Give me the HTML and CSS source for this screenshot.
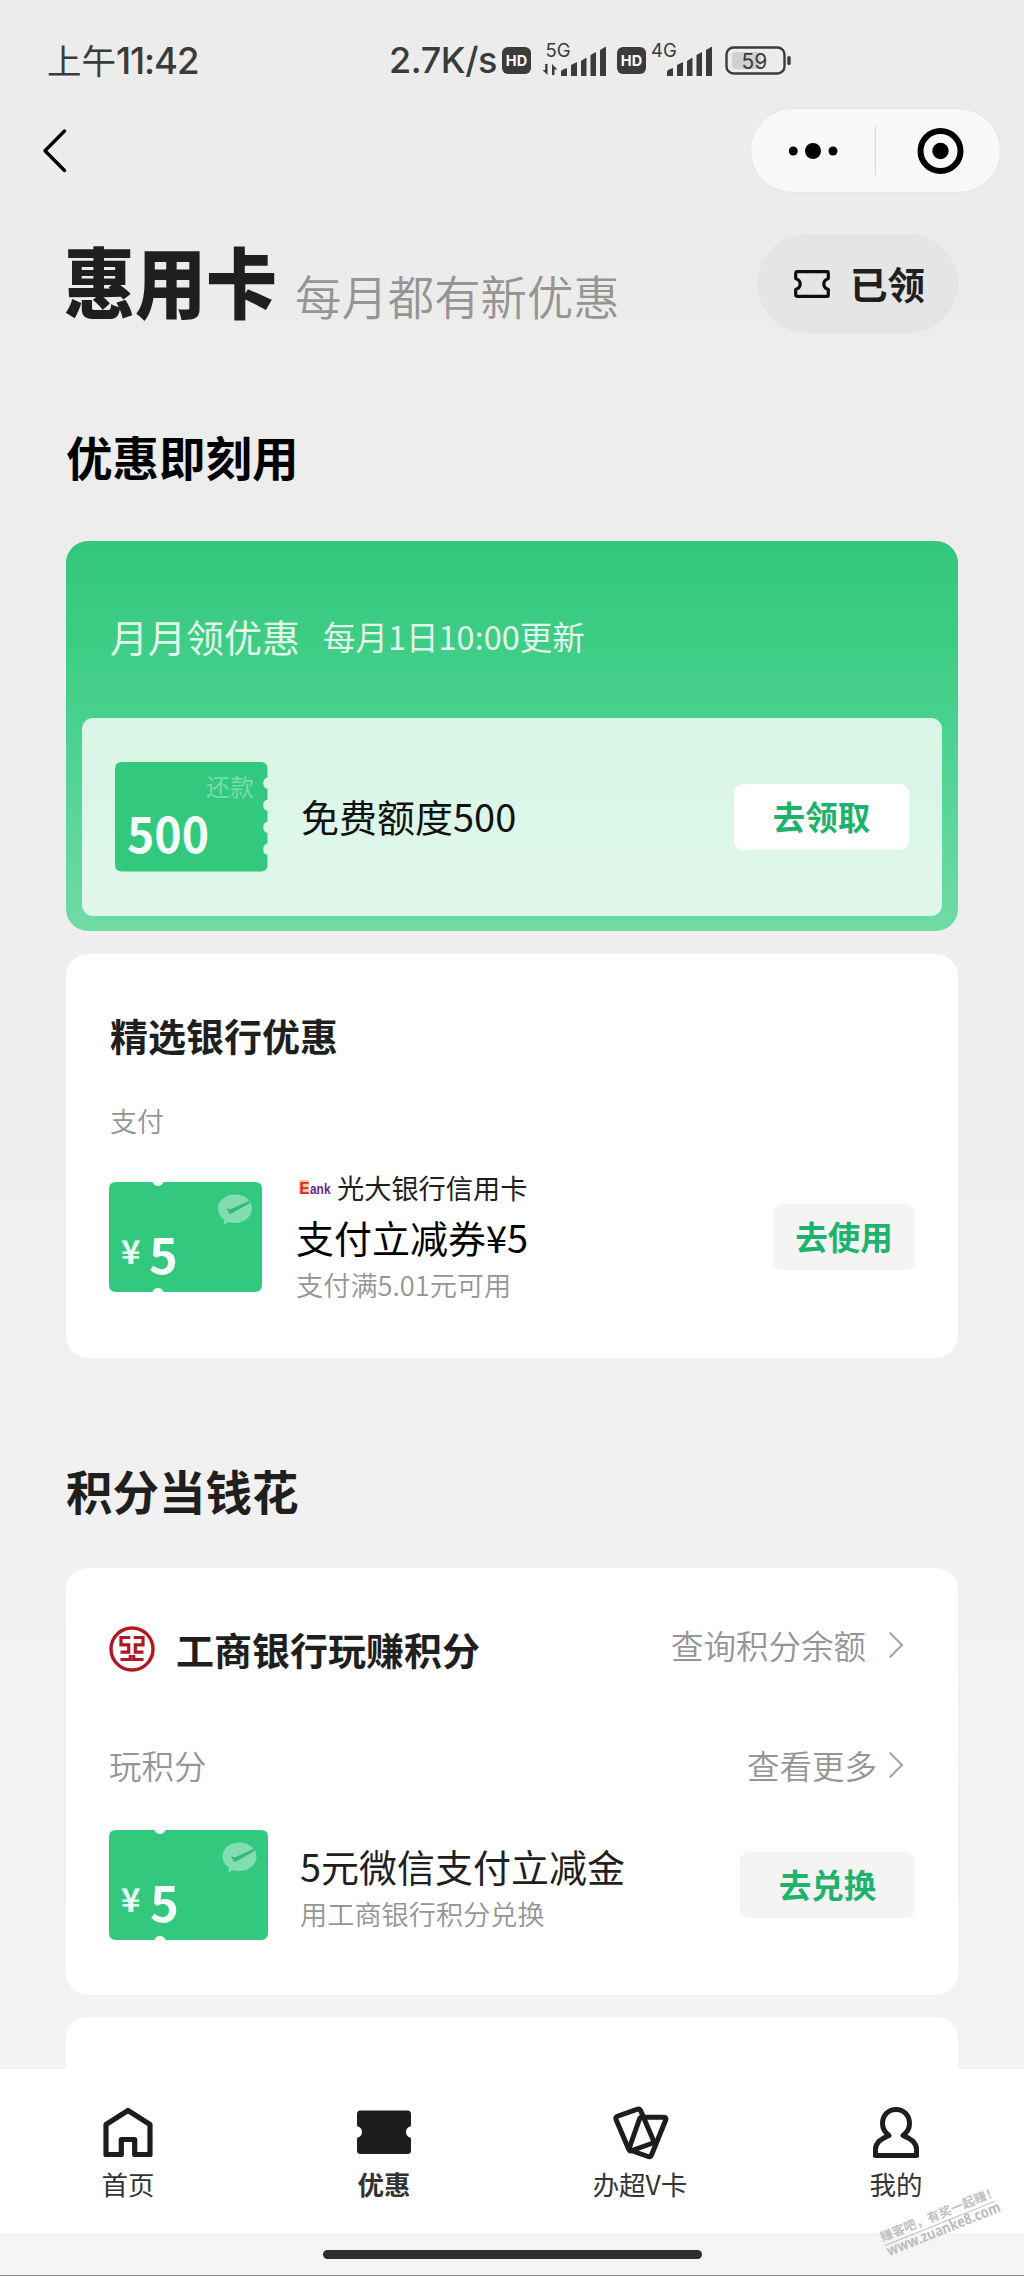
FILE: index.html
```html
<!DOCTYPE html>
<html lang="zh-CN">
<head>
<meta charset="utf-8">
<title>惠用卡</title>
<link rel="stylesheet" href="styles.css">
</head>
<body>
<div class="page">
  <header class="status">
    <span class="clock">上午<span class="clock-num">11:42</span></span>
    <span class="speed">2.7K/s</span>
    <svg class="status-icons" width="290" height="40" viewBox="502 40 290 40">
      <g fill="#3b3b3b">
        <rect x="502" y="47" width="29" height="27" rx="6"/>
        <rect x="617" y="47" width="29" height="27" rx="6"/>
        <path id="bars" d="M561 76v-4q0-2 2-2.500l4-1.500v8zM571 76V65l6-3v14zM581 76V61l5.500-3.500V76zM590.500 76V55l5.500-3v24zM600 76V50l6-3.500V76z"/>
        <use href="#bars" x="106"/>
        <path d="M547.500 64v11l-5-5h2.700v-6zM552 75V64l5.500 5.500h-3V75z"/>
        <rect x="787.300" y="56" width="3.400" height="9" rx="1.500"/>
      </g>
      <rect x="732" y="52" width="29" height="17" rx="3" fill="#d0d0d0"/>
      <rect x="726.500" y="47.500" width="58" height="26" rx="7" fill="none" stroke="#3b3b3b" stroke-width="2.400"/>
      <text class="hd" x="516.500" y="65.800">HD</text>
      <text class="hd" x="631.500" y="65.800">HD</text>
      <text class="net" x="558" y="57">5G</text>
      <text class="net" x="664" y="57">4G</text>
      <text class="batt" x="754.500" y="69">59</text>
    </svg>
  </header>

  <nav class="nav">
    <svg width="24" height="44" viewBox="0 0 24 44" fill="none" stroke="#000" stroke-width="3.400" stroke-linecap="round" stroke-linejoin="round"><path d="M21.500 2L2 21.700 21.500 41.500"/></svg>
    <div class="capsule">
      <svg width="249" height="83" viewBox="0 0 249 83">
        <circle cx="42.300" cy="42" r="4.500"/><circle cx="62" cy="42" r="8"/><circle cx="82" cy="42" r="4.500"/>
        <path d="M124.500 17v49" stroke="#ddd" stroke-width="1.300"/>
        <circle cx="189.500" cy="42" r="20" fill="none" stroke="#000" stroke-width="6"/><circle cx="189.500" cy="42" r="8.200"/>
      </svg>
    </div>
  </nav>

  <main class="content">
    <div class="hero">
      <h1 class="hero-title">惠用卡</h1>
      <p class="hero-sub">每月都有新优惠</p>
      <div class="claimed">
        <svg width="36" height="28" viewBox="0 0 36 28" fill="none" stroke="#0c0c0c" stroke-width="3.200" stroke-linejoin="round"><path d="M3 1.700h30q1.300 0 1.300 1.300v5.500q-4.500 1.500-4.500 5.500t4.500 5.500V25q0 1.300-1.300 1.300H3Q1.700 26.300 1.700 25v-5.500q4.500-1.500 4.500-5.500T1.700 8.500V3Q1.700 1.700 3 1.700z"/></svg>
        <span>已领</span>
      </div>
    </div>

    <h2 class="section-title section-title-first">优惠即刻用</h2>

    <section class="monthly">
      <div class="monthly-head">
        <span class="monthly-name">月月领优惠</span>
        <span class="monthly-time">每月1日10:00更新</span>
      </div>
      <div class="monthly-item">
        <svg class="coupon" width="153" height="110" viewBox="0 0 153 110">
          <path fill="#32c97e" d="M7 0h138.500q7 0 7 7v8.500a6 6 0 0 0 0 11.500v10.500a6 6 0 0 0 0 11.500v10.500a6 6 0 0 0 0 11.500v10.500a6 6 0 0 0 0 11.500v9.500q0 7-7 7H7q-7 0-7-7V7q0-7 7-7z"/>
          <text class="coupon-tag" x="91" y="34">还款</text>
          <text class="coupon-num" x="12" y="91" textLength="82" lengthAdjust="spacingAndGlyphs">500</text>
        </svg>
        <span class="item-title monthly-title">免费额度500</span>
        <span class="btn btn-white">去领取</span>
      </div>
    </section>

    <section class="card bank">
      <h3 class="card-title">精选银行优惠</h3>
      <p class="bank-kind">支付</p>
      <div class="row bank-row">
        <svg class="coupon" width="153" height="110" viewBox="0 0 153 110">
          <path fill="#32c97e" d="M7 0h36.500a6 6.500 0 0 0 11 0H146q7 0 7 7v96q0 7-7 7H54.500a6 6.500 0 0 0-11 0H7q-7 0-7-7V7q0-7 7-7z"/>
          <path fill="#82deb0" d="M126 12.500c9.500 0 17 6 17 14s-7.500 14.500-17 14.500q-4 0-7-1l-4 3 .3-5.500c-4-2.500-6.300-6.500-6.300-11 0-8 7.500-14 17-14z"/>
          <path fill="#35b878" d="M117.500 26l3.500 1.500 19-8.500 1 2-18.500 10.500q-1.500 1-2.500-.5z"/>
          <text class="coupon-yen" x="12" y="82">¥</text>
          <text class="coupon-num" x="40" y="92">5</text>
        </svg>
        <div class="info bank-info">
          <div class="bank-name">
            <svg width="32" height="22" viewBox="0 -2 32 22">
              <rect x="0" y="2" width="10" height="14" rx="1" fill="#f8c9a0"/>
              <text class="logo-e" x="0.500" y="15.500" textLength="10" lengthAdjust="spacingAndGlyphs">E</text>
              <text class="logo-ank" x="11" y="15.500" textLength="20.500" lengthAdjust="spacingAndGlyphs">ank</text>
            </svg>
            <span>光大银行信用卡</span>
          </div>
          <div class="item-title bank-title">支付立减券¥5</div>
          <div class="item-sub bank-sub">支付满5.01元可用</div>
        </div>
        <span class="btn btn-grey btn-use">去使用</span>
      </div>
    </section>

    <h2 class="section-title section-title-points">积分当钱花</h2>

    <section class="card points">
      <div class="points-head">
        <svg width="46" height="46" viewBox="0 0 46 46" fill="none" stroke="#b01722">
          <circle cx="23" cy="23" r="21" stroke-width="3.400"/>
          <path stroke-width="3.200" d="M21.300 11.500H12v7.300h7.700v7.400h-8.200M11.500 33.500h9.800v-4.500M24.700 11.500H34v7.300h-7.700v7.400h8.200M34.500 33.500h-9.800v-4.500"/>
        </svg>
        <h3 class="card-title points-title">工商银行玩赚积分</h3>
        <span class="link link-balance">查询积分余额</span>
        <svg class="chev" width="16" height="28" viewBox="0 0 16 28"><path d="M1.500 1.500L14 14 1.500 26.500"/></svg>
      </div>
      <div class="points-sub">
        <span class="link">玩积分</span>
        <span class="link link-more">查看更多</span>
        <svg class="chev" width="16" height="28" viewBox="0 0 16 28"><path d="M1.500 1.500L14 14 1.500 26.500"/></svg>
      </div>
      <div class="row points-row">
        <svg class="coupon" width="159" height="110" viewBox="0 0 159 110">
          <path fill="#32c97e" d="M7 0h38.500a6 6.500 0 0 0 11 0H152q7 0 7 7v96q0 7-7 7H56.500a6 6.500 0 0 0-11 0H7q-7 0-7-7V7q0-7 7-7z"/>
          <path fill="#82deb0" d="M130.500 12.500c9.500 0 17 6 17 14s-7.500 14.500-17 14.500q-4 0-7-1l-4 3 .3-5.500c-4-2.500-6.300-6.500-6.300-11 0-8 7.500-14 17-14z"/>
          <path fill="#35b878" d="M122 26l3.500 1.500 19-8.500 1 2-18.500 10.500q-1.500 1-2.500-.5z"/>
          <text class="coupon-yen" x="12" y="82">¥</text>
          <text class="coupon-num" x="41" y="92">5</text>
        </svg>
        <div class="info points-info">
          <div class="item-title points-name">5元微信支付立减金</div>
          <div class="item-sub">用工商银行积分兑换</div>
        </div>
        <span class="btn btn-grey">去兑换</span>
      </div>
    </section>

    <section class="card card-next"></section>
  </main>

  <footer class="tabs">
    <div class="tab">
      <svg width="56" height="56" viewBox="0 0 56 56" fill="none" stroke="#1d1d1d" stroke-width="5.200" stroke-linejoin="round"><path d="M28 6.500L50 20.500V50.500H34.700V35.500H21.300V50.500H6V20.500z"/></svg>
      <span>首页</span>
    </div>
    <div class="tab tab-on">
      <svg width="56" height="56" viewBox="0 0 56 56"><path fill="#1d1d1d" d="M4.500 6.500h47q3.500 0 3.500 3.500v12q-5 1.500-5 6t5 6v12.500q0 3.500-3.500 3.500h-47Q1 50 1 46.500V34q5-1.500 5-6T1 22V10q0-3.500 3.500-3.500z"/></svg>
      <span>优惠</span>
    </div>
    <div class="tab">
      <svg width="56" height="56" viewBox="0 0 56 56" fill="none" stroke="#1d1d1d" stroke-width="5" stroke-linejoin="round"><path d="M6 12L25 5.300q2.500-1 3.700 1.500L42.300 38.500 20 46.500q-2.200 1-3.200-1L4 15.500Q3 13 6 12z"/><path d="M30 13.300h22q2.700 0 1.700 2.700L39.500 51q-1 2.500-3.500 1.500L19 46.500q-2.300-1-1-4.500L27.500 15q.8-1.700 2.500-1.700z"/></svg>
      <span>办超V卡</span>
    </div>
    <div class="tab">
      <svg width="56" height="56" viewBox="0 0 56 56" fill="none" stroke="#1d1d1d" stroke-width="5" stroke-linejoin="round"><path d="M28 5.500c8 0 13.500 6 13.500 14 0 5-2.500 9-6.500 12 8 3.500 13.500 7 13.500 14v6h-41v-6c0-7 5.500-10.500 13.500-14-4-3-6.500-7-6.500-12 0-8 5.500-14 13.500-14z"/></svg>
      <span>我的</span>
    </div>
  </footer>
  <div class="home-area"><div class="home-bar"></div></div>

  <svg class="watermark" width="150" height="90" viewBox="870 2180 150 90">
    <g transform="rotate(-21.900 940 2224)">
      <text x="880" y="2219" textLength="126" class="wm-cn">赚客吧，有奖一起赚！</text>
      <path d="M881 2223.500h119" stroke="#bbb" stroke-width="1"/>
      <text x="881" y="2235" textLength="121" lengthAdjust="spacingAndGlyphs" class="wm-url">www.zuanke8.com</text>
    </g>
  </svg>
</div>
</body>
</html>
```
FILE: styles.css
```css
* { box-sizing: border-box; margin: 0; padding: 0; }

body {
  font-family: "Noto Sans CJK SC", "Noto Sans", sans-serif;
  color: #1f1f1f;
}

svg { display: block; flex: none; overflow: visible; }

.page {
  position: relative;
  display: flex;
  flex-direction: column;
  width: 1024px;
  height: 2276px;
  overflow: hidden;
  background: linear-gradient(#ececec, #ececec 300px, #f3f3f3 2069px);
}

/* status bar */
.status {
  display: flex;
  align-items: center;
  height: 80px;
  padding: 40px 0 0 47px;
  flex: none;
  color: #3b3b3b;
  line-height: 40px;
  white-space: nowrap;
}
.clock { width: 342px; font-size: 34.500px; font-weight: 400; }
.clock-num { font-family: Inter, sans-serif; font-weight: 500; font-size: 36.500px; letter-spacing: -1.1px; }
.speed { width: 113px; font-family: Inter, sans-serif; font-size: 36px; font-weight: 450; letter-spacing: -0.4px; }
.hd { font: 700 14.500px Inter, sans-serif; fill: #fff; text-anchor: middle; }
.net { font: 400 18.500px Inter, sans-serif; fill: #3b3b3b; text-anchor: middle; }
.batt { font: 400 21px Inter, sans-serif; fill: #3b3b3b; text-anchor: middle; }

/* mini program navigation */
.nav {
  display: flex;
  flex: none;
  align-items: center;
  justify-content: space-between;
  height: 112px;
  padding: 29px 24px 0 43px;
}
.capsule {
  width: 249px;
  height: 83px;
  border-radius: 42px;
  background: #f9f9f9;
  box-shadow: 0 0 0 1px #e6e6e6;
}

.content { flex: 1; min-height: 0; padding: 0 66px; overflow: hidden; }

.hero { display: flex; height: 141px; padding-top: 42px; white-space: nowrap; }
.hero-title {
  width: 231px;
  margin-left: -2px;
  font-size: 71px;
  font-weight: 900;
  line-height: 92px;
  transform: scaleY(1.09);
}
.hero-sub { padding-top: 31px; font-size: 46.400px; font-weight: 350; line-height: 60px; color: #959595; }
.claimed {
  display: flex;
  align-items: center;
  width: 201px;
  height: 99px;
  margin-left: auto;
  padding-left: 37px;
  gap: 20px;
  border-radius: 50px;
  background: #e5e5e5;
  font-size: 37.500px;
  font-weight: 700;
  line-height: 50px;
}
.claimed span { padding-bottom: 2px; }

.section-title { font-size: 46.500px; font-weight: 700; line-height: 60px; }
.section-title-first { padding: 93px 0 55px; color: #000; }
.section-title-points { padding: 102px 0 48px; }

/* monthly offer */
.monthly {
  height: 390px;
  padding: 0 16px;
  border-radius: 22px;
  background: linear-gradient(#32c77c, #48d18c 45%, #70dba5);
}
.monthly-head {
  display: flex;
  align-items: center;
  height: 177px;
  padding: 12px 0 0 28px;
  gap: 23px;
  color: rgba(255, 255, 255, .87);
}
.monthly-name { font-size: 38px; }
.monthly-time { font-size: 32.500px; }
.monthly-item {
  display: flex;
  align-items: center;
  height: 198px;
  padding: 0 33px;
  border-radius: 11px;
  background: rgba(255, 255, 255, .79);
}
.coupon-tag { font-size: 24px; fill: #7bdcab; }
.coupon-num { font-size: 49px; font-weight: 700; fill: #f2fff8; }
.coupon-yen { font-size: 33px; font-weight: 700; fill: #e5fff2; }
.monthly-title { padding: 0 0 2px 33px; color: #111; }

.item-title { font-size: 38px; line-height: 50px; white-space: nowrap; }
.item-sub { font-size: 27.200px; line-height: 36px; font-weight: 350; color: #959595; white-space: nowrap; }

.btn {
  flex: none;
  width: 175px;
  height: 66px;
  margin-left: auto;
  border-radius: 9px;
  font-size: 32.500px;
  font-weight: 700;
  line-height: 63px;
  text-align: center;
  color: #1fb26d;
}
.btn-white { background: #fff; }
.btn-grey { background: #f4f4f4; }
.btn-use { width: 142px; }

/* white cards */
.card { border-radius: 22px; background: #fff; }
.card-title { font-size: 38px; font-weight: 700; line-height: 50px; white-space: nowrap; }
.row { display: flex; align-items: flex-start; }

.bank { height: 404px; margin-top: 23px; padding: 56px 43px 0; }
.bank .card-title { padding-left: 1px; }
.bank-kind { padding: 41px 0 0 1px; font-size: 27px; font-weight: 350; line-height: 40px; color: #959595; }
.bank-row { padding-top: 41px; }
.bank-info { padding-left: 34px; }
.bank-name { display: flex; align-items: center; gap: 6px; height: 36px; margin: -13px 0 0 3px; font-size: 27.200px; line-height: 36px; }
.logo-e { font: 700 17px "Liberation Sans", sans-serif; fill: #e02323; }
.logo-ank { font: 700 15.500px "Liberation Sans", sans-serif; fill: #65268d; }
.bank-title { padding-top: 7px; color: #000; }
.bank-sub { padding-top: 4px; }
.bank .btn { margin-top: 22px; }

.points { height: 427px; padding: 58px 43px 0; }
.points-head, .points-sub { display: flex; align-items: center; }
.points-head { height: 46px; }
.points-title { padding-left: 21px; }
.link { font-size: 32.500px; font-weight: 350; line-height: 44px; color: #959595; }
.link-balance { margin: -8px 22px 0 auto; }
.link-more { margin: 0 11px 0 auto; }
.chev { margin-right: 11px; fill: none; stroke: #aaa; stroke-width: 2.400; }
.points-head .chev { margin-top: -8px; }
.points-sub { height: 44px; margin-top: 71px; }
.points-row { padding-top: 43px; }
.points-info { padding-left: 32px; }
.points-name { padding-top: 11px; }
.points-info .item-sub { padding-top: 4px; }
.points .btn { margin-top: 22px; }
.card-next { height: 200px; margin-top: 22px; }

/* bottom tabs */
.tabs { display: grid; flex: none; grid-template-columns: repeat(4, 1fr); height: 164px; padding-top: 35px; background: #fff; }
.tab { display: flex; flex-direction: column; align-items: center; font-size: 26.500px; line-height: 36px; color: #333; }
.tab span { padding-top: 6px; }
.tab-on { font-weight: 700; }
.home-area { flex: none; height: 43px; padding-top: 17px; border-bottom: 1px solid #888; background: #f5f5f5; }
.home-bar { width: 379px; height: 9px; margin: 0 auto; border-radius: 5px; background: #2e2e2e; }

.watermark { position: absolute; left: 870px; top: 2180px; }
.wm-cn { font-size: 12.500px; font-weight: 700; fill: #c0c0c0; }
.wm-url { font: 700 15px "Open Sans", sans-serif; fill: #bcbcbc; }
```
